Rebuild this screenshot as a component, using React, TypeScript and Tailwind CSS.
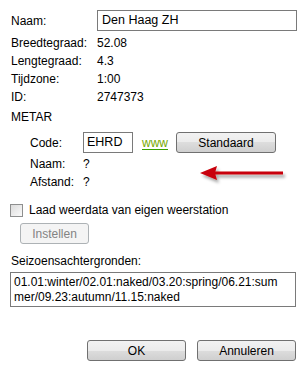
import React from "react";

const btn =
  "h-[21px] rounded-[3px] border border-[#707070] bg-[linear-gradient(#f2f2f2,#ebebeb_50%,#dddddd_50%,#cfcfcf)] text-[12px] text-black flex items-center justify-center";

export default function App() {
  return (
    <div
      className="w-[307px] h-[372px] bg-white text-black text-[12px] relative overflow-hidden"
      style={{ fontFamily: '"Liberation Sans", Arial, sans-serif' }}
    >
      <div className="flex flex-col pt-[10px]">
        {/* Naam */}
        <div className="flex items-center h-[21px] pl-[11px]">
          <div className="w-[86px] leading-[14px]">Naam:</div>
          <div className="w-[200px] h-[21px] border border-[#7a7a7a] flex items-center pl-[4px] text-[12.5px]">
            Den Haag ZH
          </div>
        </div>
        <div className="mt-[3px] flex flex-col pl-[11px]">
          {[
            ["Breedtegraad:", "52.08"],
            ["Lengtegraad:", "4.3"],
            ["Tijdzone:", "1:00"],
            ["ID:", "2747373"],
          ].map(([l, v]) => (
            <div key={l} className="flex items-center h-[18px]">
              <div className="w-[86px]">{l}</div>
              <div>{v}</div>
            </div>
          ))}
        </div>
        <div className="mt-[2px] h-[18px] flex items-center pl-[11px]">METAR</div>
        {/* Code row */}
        <div className="mt-[6px] flex items-center h-[21px] pl-[30px]">
          <div className="w-[53px]">Code:</div>
          <div className="w-[50px] h-[21px] border border-[#7a7a7a] flex items-center pl-[3px] text-[12.5px]">
            EHRD
          </div>
          <div className="ml-[9px] text-[#76a800] underline decoration-[#3aa000] underline-offset-2">
            www
          </div>
          <div className={btn + " ml-[8px] w-[100px] text-[12.5px]"}>Standaard</div>
        </div>
        <div className="mt-[2px] flex flex-col pl-[30px]">
          <div className="flex items-center h-[18px]">
            <div className="w-[53px]">Naam:</div>
            <div>?</div>
          </div>
          <div className="flex items-center h-[18px]">
            <div className="w-[53px]">Afstand:</div>
            <div>?</div>
          </div>
        </div>
        {/* checkbox */}
        <div className="mt-[12px] flex items-center h-[14px] pl-[10px]">
          <div className="w-[13px] h-[13px] border border-[#8e8f8f] bg-[linear-gradient(135deg,#dcdcdc,#fafafa)]" />
          <div className="ml-[6px] text-[12px]">Laad weerdata van eigen weerstation</div>
        </div>
        <div className="mt-[6px] pl-[20px]">
          <div className="w-[69px] h-[21px] rounded-[3px] border border-[#adb2b5] bg-[#f4f4f4] text-[#838383] text-[12px] flex items-center justify-center">
            Instellen
          </div>
        </div>
        <div className="mt-[8px] h-[18px] flex items-center pl-[11px]">Seizoensachtergronden:</div>
        <div className="mt-[2px] ml-[10px] w-[286px] h-[35px] border border-[#7a7a7a] pl-[3px] pt-[2px] leading-[15px] text-[12px]">
          <div>01.01:winter/02.01:naked/03.20:spring/06.21:sum</div>
          <div>mer/09.23:autumn/11.15:naked</div>
        </div>
        <div className="mt-[33px] flex pl-[87px] gap-[11px]">
          <div className={btn + " w-[99px] h-[20px]"}>OK</div>
          <div className={btn + " w-[99px] h-[20px]"}>Annuleren</div>
        </div>
      </div>
      {/* red arrow */}
      <svg
        className="absolute left-[196px] top-[162px]"
        width="100"
        height="28"
        viewBox="0 0 100 28"
      >
        <defs>
          <filter id="sh" x="-20%" y="-50%" width="140%" height="200%">
            <feGaussianBlur in="SourceAlpha" stdDeviation="1.6" />
            <feOffset dx="2" dy="3" result="b" />
            <feFlood floodColor="#000" floodOpacity="0.35" />
            <feComposite in2="b" operator="in" />
            <feMerge>
              <feMergeNode />
              <feMergeNode in="SourceGraphic" />
            </feMerge>
          </filter>
        </defs>
        <g filter="url(#sh)">
          <rect x="17" y="9.5" width="70" height="3" fill="#c8000a" />
          <polygon points="4,11 21,4 19,11 21,18" fill="#c8000a" />
        </g>
      </svg>
    </div>
  );
}
